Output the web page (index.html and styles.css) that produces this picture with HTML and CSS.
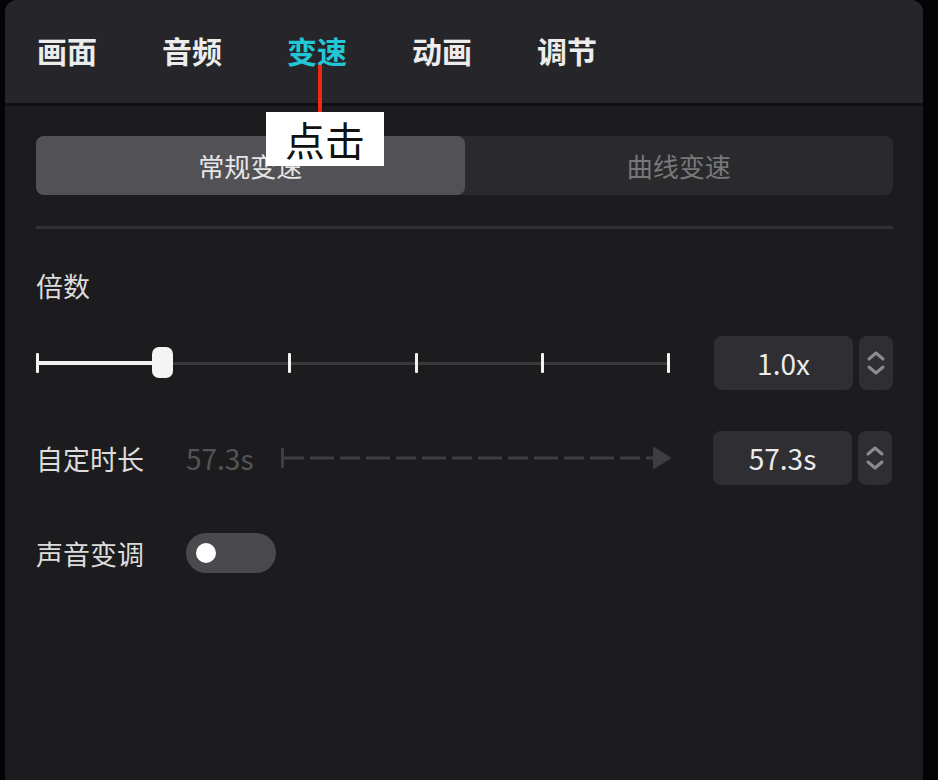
FILE: index.html
```
<!DOCTYPE html>
<html lang="zh-CN">
<head>
    <meta charset="UTF-8">
    <meta name="viewport" content="width=device-width, initial-scale=1.0">
    <title>变速</title>
    <link rel="stylesheet" href="styles.css">
</head>
<body>
    <section class="panel">
        <header class="tabs">
            <a class="tab">画面</a>
            <a class="tab">音频</a>
            <a class="tab active">变速</a>
            <a class="tab">动画</a>
            <a class="tab">调节</a>
        </header>

        <div class="callout">
            <span class="callout-line"></span>
            <span class="callout-box">点击</span>
        </div>

        <main class="content">
            <nav class="segment">
                <button class="segment-item on">常规变速</button>
                <button class="segment-item">曲线变速</button>
            </nav>

            <hr class="divider">

            <p class="label">倍数</p>

            <div class="row speed-row">
                <div class="slider">
                    <div class="ticks">
                        <i></i><i></i><i></i><i></i><i></i><i></i>
                    </div>
                    <span class="fill"></span>
                    <span class="thumb"></span>
                </div>
                <div class="value">1.0x</div>
                <div class="spin">
                    <svg width="20" height="30" viewBox="0 0 20 30"><path d="M3 11l7-6 7 6M3 19l7 6 7-6" fill="none" stroke="#8c8c90" stroke-width="3" stroke-linecap="round" stroke-linejoin="round"/></svg>
                </div>
            </div>

            <div class="row duration-row">
                <span class="row-label">自定时长</span>
                <span class="muted">57.3s</span>
                <svg class="arrow" width="390" height="24" viewBox="0 0 390 24">
                    <path d="M1.5 2v20" stroke="#3e3e41" stroke-width="3"/>
                    <path d="M3 12h370" stroke="#3e3e41" stroke-width="3" stroke-dasharray="20 6 24 6"/>
                    <path d="M373 2l16 10-16 10z" fill="#3e3e41" stroke="#3e3e41" stroke-width="2" stroke-linejoin="round"/>
                </svg>
                <div class="value">57.3s</div>
                <div class="spin">
                    <svg width="20" height="30" viewBox="0 0 20 30"><path d="M3 11l7-6 7 6M3 19l7 6 7-6" fill="none" stroke="#8c8c90" stroke-width="3" stroke-linecap="round" stroke-linejoin="round"/></svg>
                </div>
            </div>

            <div class="row pitch-row">
                <span class="row-label">声音变调</span>
                <span class="toggle"><span class="knob"></span></span>
            </div>
        </main>
    </section>
</body>
</html>
```

FILE: styles.css
```
html {
    box-sizing: border-box;
    font-family: "Noto Sans CJK SC", "Noto Sans", sans-serif;
    font-size: 16px;
}

*,
*:before,
*:after {
    box-sizing: inherit;
}

body {
    margin: 0;
    height: 780px;
    overflow: hidden;
    background-color: #040407;
}

.panel {
    position: relative;
    margin-left: 5px;
    width: 918px;
    height: 780px;
    background-color: #1c1c1e;
    border-radius: 12px 12px 0 0;
    overflow: hidden;
}

.tabs {
    display: flex;
    align-items: center;
    gap: 65px;
    height: 106px;
    padding: 0 0 3px 32px;
    background-color: #262529;
    border-bottom: 3px solid #111113;
}

.tab {
    font-size: 30px;
    font-weight: 700;
    line-height: 1;
    color: #ececec;
}

.tab.active {
    color: #22c6d4;
}

.callout {
    position: absolute;
    left: 261px;
    top: 65px;
    display: flex;
    flex-direction: column;
}

.callout-line {
    width: 4px;
    height: 47px;
    margin-left: 52px;
    background-color: #ea2a12;
}

.callout-box {
    width: 118px;
    height: 54px;
    background-color: #ffffff;
    color: #111;
    font-size: 40px;
    line-height: 54px;
    text-align: center;
}

.content {
    padding: 30px 30px 0 31px;
}

.segment {
    display: flex;
    height: 59px;
    background-color: #2a2a2d;
    border-radius: 8px;
}

.segment-item {
    flex: 1;
    border: 0;
    border-radius: 8px;
    background: none;
    font-family: inherit;
    font-size: 26px;
    color: #78787b;
}

.segment-item.on {
    background-color: #525256;
    color: #e6e6e6;
}

.divider {
    margin: 31px 0 0;
    height: 3px;
    border: 0;
    background-color: #313133;
}

.label {
    margin: 39px 0 0;
    font-size: 27px;
    line-height: 36px;
    color: #dcdcdc;
}

.row {
    display: flex;
    align-items: center;
}

.speed-row {
    margin-top: 32px;
    height: 54px;
}

.slider {
    position: relative;
    width: 634px;
    height: 22px;
    margin-right: 44px;
}

.ticks {
    display: flex;
    justify-content: space-between;
    align-items: center;
    height: 100%;
    background: linear-gradient(#3a3a3d, #3a3a3d) center / 100% 3px no-repeat;
}

.ticks i {
    width: 3px;
    height: 20px;
    background-color: #f2f2f2;
    border-radius: 1px;
}

.fill {
    position: absolute;
    left: 0;
    top: 9px;
    width: 128px;
    height: 4px;
    background-color: #f2f2f2;
}

.thumb {
    position: absolute;
    left: 116px;
    top: -5px;
    width: 21px;
    height: 31px;
    background-color: #f4f4f4;
    border-radius: 7px;
}

.value {
    width: 139px;
    height: 54px;
    background-color: #2f2f33;
    border-radius: 8px;
    font-size: 28px;
    line-height: 54px;
    text-align: center;
    color: #ebebeb;
}

.spin {
    display: flex;
    align-items: center;
    justify-content: center;
    width: 34px;
    height: 54px;
    margin-left: 6px;
    background-color: #2f2f33;
    border-radius: 8px;
}

.duration-row {
    margin-top: 41px;
    height: 54px;
}

.row-label {
    width: 150px;
    font-size: 27px;
    color: #dcdcdc;
}

.muted {
    width: 95px;
    font-size: 28px;
    color: #545457;
}

.arrow {
    margin-right: 42px;
}

.pitch-row {
    margin-top: 48px;
    height: 40px;
}

.toggle {
    display: flex;
    align-items: center;
    width: 90px;
    height: 40px;
    padding-left: 10px;
    background-color: #4a4a4e;
    border-radius: 20px;
}

.knob {
    width: 20px;
    height: 20px;
    background-color: #ffffff;
    border-radius: 50%;
}
```
